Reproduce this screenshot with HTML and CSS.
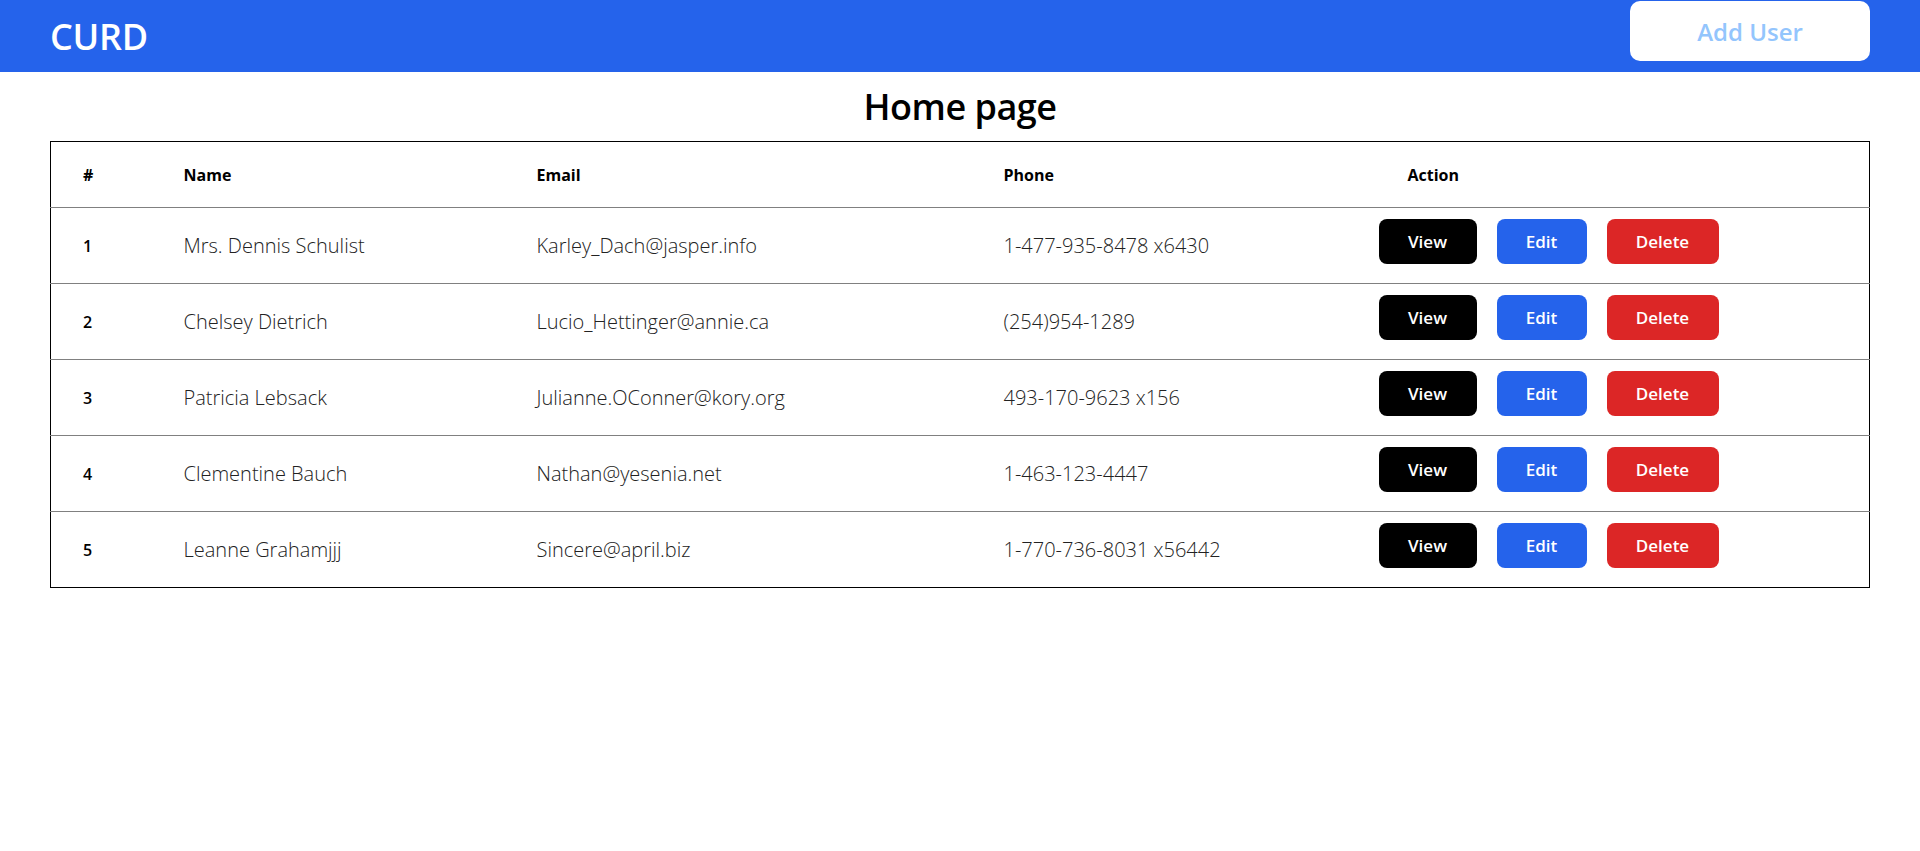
FILE: index.html
```html
<!DOCTYPE html>
<html lang="en">
<head>
<meta charset="utf-8">
<title>CURD</title>
<link rel="stylesheet" href="styles.css">
</head>
<body>
<header class="topbar">
  <h1 class="brand">CURD</h1>
  <button class="add-btn">Add User</button>
</header>
<main class="content">
  <h2 class="page-title">Home page</h2>
  <table class="users">
    <colgroup>
      <col class="c-num"><col class="c-name"><col class="c-email"><col class="c-phone"><col class="c-action">
    </colgroup>
    <thead>
      <tr><th>#</th><th>Name</th><th>Email</th><th>Phone</th><th class="th-action">Action</th></tr>
    </thead>
    <tbody>
      <tr><td class="num">1</td><td>Mrs. Dennis Schulist</td><td>Karley_Dach@jasper.info</td><td>1-477-935-8478 x6430</td><td><div class="actions"><button class="btn view">View</button><button class="btn edit">Edit</button><button class="btn del">Delete</button></div></td></tr>
      <tr><td class="num">2</td><td>Chelsey Dietrich</td><td>Lucio_Hettinger@annie.ca</td><td>(254)954-1289</td><td><div class="actions"><button class="btn view">View</button><button class="btn edit">Edit</button><button class="btn del">Delete</button></div></td></tr>
      <tr><td class="num">3</td><td>Patricia Lebsack</td><td>Julianne.OConner@kory.org</td><td>493-170-9623 x156</td><td><div class="actions"><button class="btn view">View</button><button class="btn edit">Edit</button><button class="btn del">Delete</button></div></td></tr>
      <tr><td class="num">4</td><td>Clementine Bauch</td><td>Nathan@yesenia.net</td><td>1-463-123-4447</td><td><div class="actions"><button class="btn view">View</button><button class="btn edit">Edit</button><button class="btn del">Delete</button></div></td></tr>
      <tr><td class="num">5</td><td>Leanne Grahamjjj</td><td>Sincere@april.biz</td><td>1-770-736-8031 x56442</td><td><div class="actions"><button class="btn view">View</button><button class="btn edit">Edit</button><button class="btn del">Delete</button></div></td></tr>
    </tbody>
  </table>
</main>
</body>
</html>
```

FILE: styles.css
```css
* { box-sizing: border-box; }
body {
  margin: 0;
  font-family: "Open Sans", "Noto Sans", sans-serif;
  color: #000;
  background: #fff;
}
.topbar {
  height: 72px;
  background: #2563eb;
  display: flex;
  align-items: center;
  justify-content: space-between;
  padding: 0 50px 0 50px;
}
.brand {
  margin: 0;
  color: #fff;
  font-size: 36px;
  font-weight: 600;
  letter-spacing: -0.3px;
}
.add-btn {
  width: 240px;
  height: 60px;
  margin-top: -10px;
  background: #fff;
  border: none;
  border-radius: 10px;
  color: #93c5fd;
  font-family: inherit;
  font-size: 24px;
  font-weight: 600;
}
.content {
  padding: 0 50px;
}
.page-title {
  margin: 0;
  height: 69px;
  display: flex;
  align-items: center;
  justify-content: center;
  font-size: 36px;
  font-weight: 600;
  letter-spacing: -0.5px;
}
.users {
  width: 100%;
  border-collapse: collapse;
  border: 1px solid #000;
  table-layout: fixed;
}
.c-num { width: 101px; }
.c-name { width: 353px; }
.c-email { width: 467px; }
.c-phone { width: 375px; }
.users th {
  height: 66px;
  text-align: left;
  font-size: 16px;
  font-weight: 700;
  padding: 0 0 0 32px;
}
.users th.th-action { padding-left: 61px; }
.users td {
  height: 76px;
  padding: 0 0 0 32px;
  font-size: 20px;
  font-weight: 300;
  color: #222;
  border-top: 1px solid #808080;
  white-space: nowrap;
}
.users td.num {
  font-size: 16px;
  font-weight: 600;
  color: #000;
}
.actions {
  display: flex;
  gap: 20px;
  margin-top: -8px;
}
.btn {
  height: 45px;
  border: none;
  border-radius: 8px;
  color: #fff;
  font-family: inherit;
  font-size: 17px;
  font-weight: 600;
}
.view { width: 98px; background: #000; }
.edit { width: 90px; background: #2563eb; }
.del { width: 112px; background: #dc2626; }
```
